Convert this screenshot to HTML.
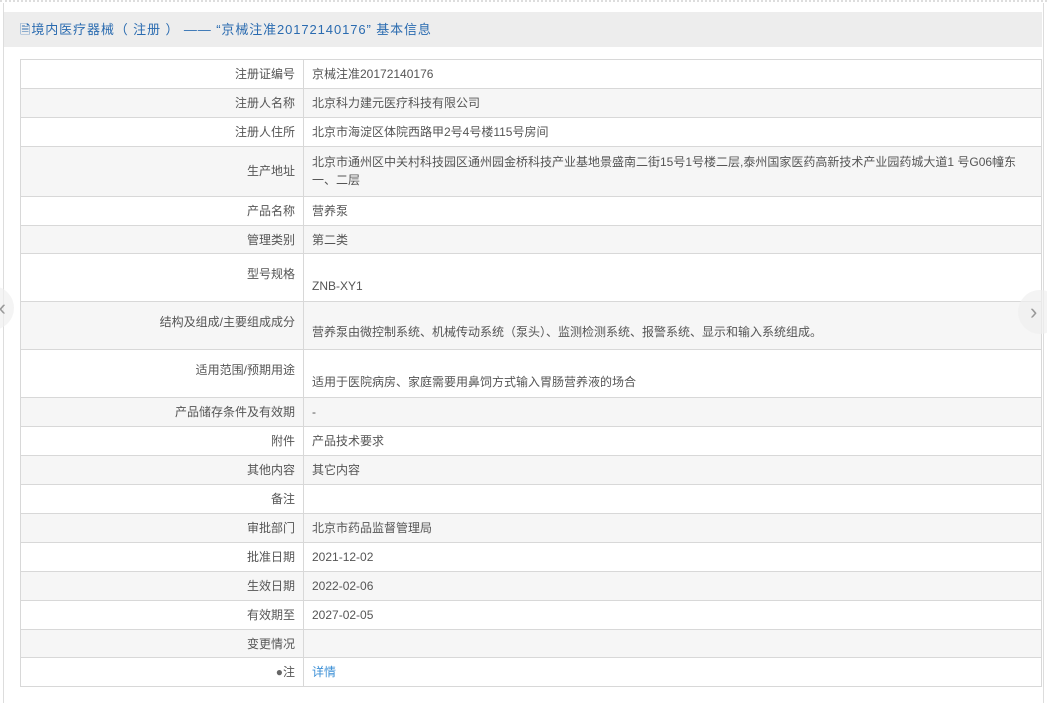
<!DOCTYPE html>
<html><head><meta charset="utf-8"><style>
*{margin:0;padding:0;box-sizing:border-box}
body{width:1047px;height:692px;overflow:hidden;background:#fff;font-family:"Liberation Sans","Noto Sans CJK SC",sans-serif;font-size:12px;color:#555;position:relative}
.top{position:absolute;left:0;top:0;width:1047px;height:3px;border-top:2px dotted #ddd}
.panel{position:absolute;left:3px;top:3px;width:1041px;height:700px;border-left:1px solid #ddd;border-right:1px solid #ddd}
.hd{position:absolute;left:4px;top:12px;width:1038px;height:35px;background:#ededed;color:#2a6bb0;font-size:13px;line-height:35px;padding-left:16px;letter-spacing:0.9px;white-space:pre}
table{position:absolute;left:20px;top:59px;width:1022px;border-collapse:collapse;table-layout:fixed}
td{border:1px solid #d8d8d8;height:28.9px;padding:0 8px;line-height:18px;vertical-align:middle}
td.l{width:283px;text-align:right;padding-right:8px}
tr:nth-child(even) td{background:#f6f6f6}
td.v{white-space:nowrap;overflow:hidden}
.t td{height:48px}
.t td.v{vertical-align:bottom;padding-bottom:6px}
.t td.l{padding-bottom:8px}
.a{color:#3b8fd6}
.arr{position:absolute;width:44px;height:44px;border-radius:50%;background:rgba(240,240,240,.7);color:#999;font-size:22px;line-height:44px}
</style></head><body>
<div class="top"></div><div class="panel"></div>
<div class="hd">🗎境内医疗器械（ 注册 ） —— “京械注准20172140176” 基本信息</div>
<table>
<tr><td class="l">注册证编号</td><td class="v">京械注准20172140176</td></tr>
<tr><td class="l">注册人名称</td><td class="v">北京科力建元医疗科技有限公司</td></tr>
<tr><td class="l">注册人住所</td><td class="v">北京市海淀区体院西路甲2号4号楼115号房间</td></tr>
<tr><td class="l" style="height:50px">生产地址</td><td class="v">北京市通州区中关村科技园区通州园金桥科技产业基地景盛南二街15号1号楼二层,泰州国家医药高新技术产业园药城大道1 号G06幢东<br>一、二层</td></tr>
<tr><td class="l">产品名称</td><td class="v">营养泵</td></tr>
<tr><td class="l">管理类别</td><td class="v">第二类</td></tr>
<tr class="t"><td class="l">型号规格</td><td class="v">ZNB-XY1</td></tr>
<tr class="t"><td class="l">结构及组成/主要组成成分</td><td class="v" style="padding-bottom:8px">营养泵由微控制系统、机械传动系统（泵头）、监测检测系统、报警系统、显示和输入系统组成。</td></tr>
<tr class="t"><td class="l">适用范围/预期用途</td><td class="v">适用于医院病房、家庭需要用鼻饲方式输入胃肠营养液的场合</td></tr>
<tr><td class="l">产品储存条件及有效期</td><td class="v">-</td></tr>
<tr><td class="l">附件</td><td class="v">产品技术要求</td></tr>
<tr><td class="l">其他内容</td><td class="v">其它内容</td></tr>
<tr><td class="l">备注</td><td class="v"></td></tr>
<tr><td class="l">审批部门</td><td class="v">北京市药品监督管理局</td></tr>
<tr><td class="l">批准日期</td><td class="v">2021-12-02</td></tr>
<tr><td class="l">生效日期</td><td class="v">2022-02-06</td></tr>
<tr><td class="l">有效期至</td><td class="v">2027-02-05</td></tr>
<tr><td class="l">变更情况</td><td class="v"></td></tr>
<tr><td class="l"><span style="color:#666">●</span>注</td><td class="v a">详情</td></tr>
</table>
<div class="arr" style="left:-30px;top:286px;text-align:right;padding-right:8px">‹</div>
<div class="arr" style="left:1018px;top:290px;padding-left:12px">›</div>
</body></html>
